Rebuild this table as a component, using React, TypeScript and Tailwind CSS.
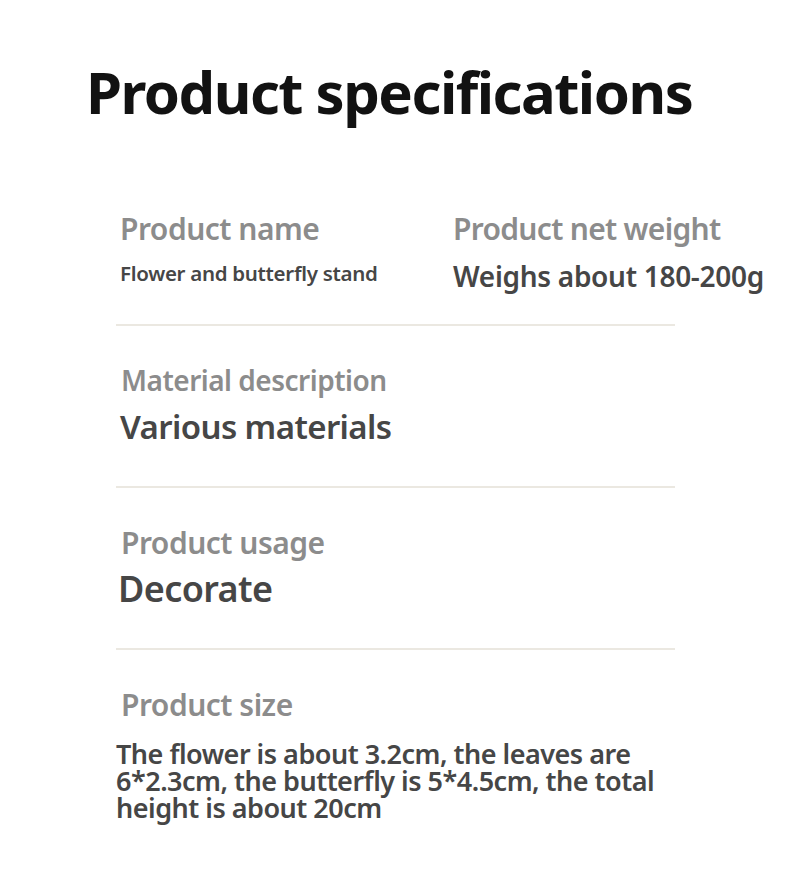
const font = { fontFamily: '"Noto Sans", "Open Sans", sans-serif' };

function Divider() {
  return <div className="h-[2px] w-[559px] bg-[#ebe8e1]" />;
}

export default function App() {
  return (
    <div className="w-[790px] h-[888px] bg-white overflow-hidden" style={font}>
      <h1 className="pl-[86px] pt-[52px] text-[58px] leading-[80px] font-bold tracking-[-1.5px] text-[#121212]">
        Product specifications
      </h1>

      <div className="pl-[116px] pt-[79px]">
        {/* Row 1 */}
        <div className="flex h-[113px]">
          <div className="w-[337px] pl-[4px]">
            <div className="text-[30px] leading-[36px] font-semibold text-[#8c8c8c] tracking-[-0.5px]">Product name</div>
            <div className="mt-[12px] text-[20.5px] leading-[28px] font-semibold text-[#464646] tracking-[-0.3px]">Flower and butterfly stand</div>
          </div>
          <div>
            <div className="text-[30px] leading-[36px] font-semibold text-[#8c8c8c] tracking-[-0.7px]">Product net weight</div>
            <div className="mt-[12px] text-[28px] leading-[34px] font-semibold text-[#464646] tracking-[-0.3px]">Weighs about 180-200g</div>
          </div>
        </div>
        <Divider />

        {/* Row 2 */}
        <div className="h-[160px] pl-[4px] pt-[37px]">
          <div className="pl-[1px] text-[28px] leading-[34px] font-semibold text-[#8c8c8c] tracking-[-0.5px]">Material description</div>
          <div className="mt-[10px] text-[33px] leading-[40px] font-semibold text-[#464646] tracking-[-0.6px]">Various materials</div>
        </div>
        <Divider />

        {/* Row 3 */}
        <div className="h-[160px] pl-[4px] pt-[37px]">
          <div className="pl-[1px] text-[30px] leading-[36px] font-semibold text-[#8c8c8c] tracking-[-0.5px]">Product usage</div>
          <div className="mt-[7px] -ml-[2px] text-[36px] leading-[42px] font-semibold text-[#464646] tracking-[-0.6px]">Decorate</div>
        </div>
        <Divider />

        {/* Row 4 */}
        <div className="pt-[37px]">
          <div className="pl-[5px] text-[30px] leading-[36px] font-semibold text-[#8c8c8c] tracking-[-0.5px]">Product size</div>
          <p className="mt-[17px] w-[545px] text-[27px] leading-[27px] font-semibold text-[#464646] tracking-[-0.5px]">
            The flower is about 3.2cm, the leaves are 6*2.3cm, the butterfly is 5*4.5cm, the total height is about 20cm
          </p>
        </div>
      </div>
    </div>
  );
}
